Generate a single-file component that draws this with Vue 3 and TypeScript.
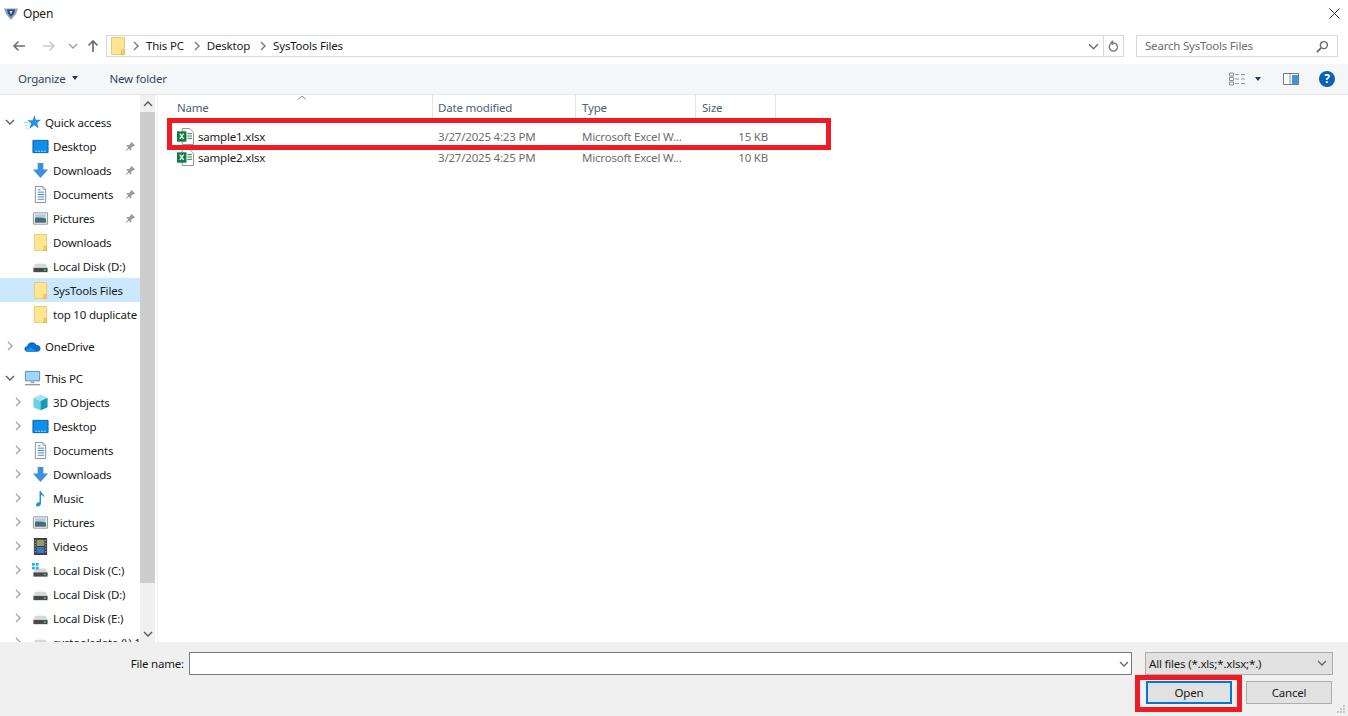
<script setup lang="ts">
interface TreeRow {
  label: string
  icon: string
  child?: boolean
  caret?: 'open' | 'closed'
  pin?: boolean
  selected?: boolean
  gapBefore?: boolean
}

interface FileRow {
  name: string
  modified: string
  type: string
  size: string
}

const treeRows: TreeRow[] = [
  { label: 'Quick access', icon: 'star', caret: 'open' },
  { label: 'Desktop', icon: 'desktop', child: true, pin: true },
  { label: 'Downloads', icon: 'download', child: true, pin: true },
  { label: 'Documents', icon: 'document', child: true, pin: true },
  { label: 'Pictures', icon: 'picture', child: true, pin: true },
  { label: 'Downloads', icon: 'folder', child: true },
  { label: 'Local Disk (D:)', icon: 'drive', child: true },
  { label: 'SysTools Files', icon: 'folder', child: true, selected: true },
  { label: 'top 10 duplicate', icon: 'folder', child: true },
  { label: 'OneDrive', icon: 'cloud', caret: 'closed', gapBefore: true },
  { label: 'This PC', icon: 'pc', caret: 'open', gapBefore: true },
  { label: '3D Objects', icon: 'cube', child: true, caret: 'closed' },
  { label: 'Desktop', icon: 'desktop', child: true, caret: 'closed' },
  { label: 'Documents', icon: 'document', child: true, caret: 'closed' },
  { label: 'Downloads', icon: 'download', child: true, caret: 'closed' },
  { label: 'Music', icon: 'music', child: true, caret: 'closed' },
  { label: 'Pictures', icon: 'picture', child: true, caret: 'closed' },
  { label: 'Videos', icon: 'video', child: true, caret: 'closed' },
  { label: 'Local Disk (C:)', icon: 'system-drive', child: true, caret: 'closed' },
  { label: 'Local Disk (D:)', icon: 'drive', child: true, caret: 'closed' },
  { label: 'Local Disk (E:)', icon: 'drive', child: true, caret: 'closed' },
  { label: 'systoolsdata (\\) 1', icon: 'drive', child: true, caret: 'closed' },
]

const files: FileRow[] = [
  { name: 'sample1.xlsx', modified: '3/27/2025 4:23 PM', type: 'Microsoft Excel W...', size: '15 KB' },
  { name: 'sample2.xlsx', modified: '3/27/2025 4:25 PM', type: 'Microsoft Excel W...', size: '10 KB' },
]

const crumbs: string[] = ['This PC', 'Desktop', 'SysTools Files']
</script>

<template>
  <div class="dialog">
    <svg class="sprites" aria-hidden="true">
      <symbol id="i-folder" viewBox="0 0 14 18">
        <path d="M.5.500h13v17H.5z" fill="#fde68f" stroke="#e9c976" />
        <path d="M10.500 13h3v4.500h-3z" fill="#f5cf6a" stroke="#dfb856" stroke-width=".7" />
      </symbol>
      <symbol id="i-desktop" viewBox="0 0 18 18">
        <path d="M1 2.500h16v13H1z" fill="#0d8fea" stroke="#0a5fa8" />
        <path d="M3.500 14h11" stroke="#bfe3fb" stroke-width="1" stroke-dasharray="2 1" />
      </symbol>
      <symbol id="i-download" viewBox="0 0 18 18">
        <path d="M6 1h6v7h5l-8 9-8-9h5z" fill="#3f8fe0" />
      </symbol>
      <symbol id="i-document" viewBox="0 0 18 18">
        <path d="M3.500 .5h8l3 3v14h-11z" fill="#fff" stroke="#8b8b8b" />
        <path d="M11.500 .5v3h3" fill="#e5e5e5" stroke="#8b8b8b" stroke-width=".8" />
        <path d="M6 4h3M6 6.500h7M6 9h7M6 11.500h7M6 14h7" stroke="#2f86cc" />
      </symbol>
      <symbol id="i-picture" viewBox="0 0 18 18">
        <path d="M1.500 3h15v12h-15z" fill="#fff" stroke="#8d8d8d" />
        <path d="M3 4.500h12v4H3z" fill="#a9cfe9" />
        <path d="M3 8.500c4-1 8 0 12 .5v4.500H3z" fill="#4c6d76" />
      </symbol>
      <symbol id="i-drive" viewBox="0 0 18 18">
        <path d="M3.500 6h11l2 4.500h-15z" fill="#d8d8d8" />
        <path d="M1.500 10.500h15v4.500h-15z" fill="#4a4a4a" />
        <path d="M12.500 12h2v1.500h-2z" fill="#55d45c" />
      </symbol>
      <symbol id="i-system-drive" viewBox="0 0 18 18">
        <path d="M3.500 7h11l2 4h-15z" fill="#d8d8d8" />
        <path d="M1.500 11h15v4.500h-15z" fill="#4a4a4a" />
        <path d="M12.500 12.500h2V14h-2z" fill="#55d45c" />
        <path d="M0 1h3v3H0zM4 1h3v3H4zM0 5h3v3H0zM4 5h3v3H4z" fill="#21b4e8" />
      </symbol>
      <symbol id="i-star" viewBox="0 0 18 18">
        <path d="M11 1l1.600 5H18l-4 3.400 1.500 6L10.800 12 5.500 16l2-6.200L3.500 6.500h5.600z" fill="#2b8fe0" />
        <path d="M0 9h4M1 12h3M2 15h2" stroke="#9ccff2" />
      </symbol>
      <symbol id="i-cloud" viewBox="0 0 18 18">
        <path d="M4 14.500C1.500 14.500.5 13 .5 11.600c0-1.600 1.300-2.800 2.800-2.900C4 6 6 4.500 8.500 4.500c2.300 0 3.900 1.300 4.700 3 2.400-.2 4.300 1.400 4.300 3.600 0 1.900-1.400 3.400-3.600 3.400z" fill="#0b6fcb" />
        <path d="M4 14.500c-1.600 0-2.700-.6-3.200-1.500l6.300-3.400 7 4.900z" fill="#1c8fe6" />
      </symbol>
      <symbol id="i-pc" viewBox="0 0 18 18">
        <path d="M1.500 1.500h15v10h-15z" fill="#9fd7fb" stroke="#4e90c2" />
        <path d="M7 12h4v2H7z" fill="#a8a8a8" />
        <path d="M1 15.500h16" stroke="#9a9a9a" stroke-width="1.500" />
      </symbol>
      <symbol id="i-cube" viewBox="0 0 18 18">
        <path d="M9 .5l7.500 3.500L9 7.500 1.500 4z" fill="#a3e6ef" />
        <path d="M1.500 4L9 7.500v10l-7.500-3.500z" fill="#6ed2e2" />
        <path d="M16.500 4v10L9 17.500v-10z" fill="#159cb4" />
      </symbol>
      <symbol id="i-music" viewBox="0 0 18 18">
        <path d="M8 1h1.500c.3 3 4 3.500 3.500 7-.8-1.700-2-2.500-3.400-2.700V14c0 2-1.800 3.500-3.600 3.500S4 16.200 4.600 14.600C5.100 13.400 6.700 12.700 8 13z" fill="#1f8fe3" />
      </symbol>
      <symbol id="i-video" viewBox="0 0 18 18">
        <path d="M2 0h14v18H2z" fill="#39424c" />
        <path d="M5 2h8v6.500H5z" fill="#9a9a5a" />
        <path d="M5 9.500h8V16H5z" fill="#3d76c9" />
        <path d="M3 2h1v1H3zM3 5h1v1H3zM3 8h1v1H3zM3 11h1v1H3zM3 14h1v1H3zM14 2h1v1h-1zM14 5h1v1h-1zM14 8h1v1h-1zM14 11h1v1h-1zM14 14h1v1h-1z" fill="#d8d8d8" />
      </symbol>
      <symbol id="i-excel" viewBox="0 0 18 18">
        <path d="M5.500 .5h8l4 4v13h-12z" fill="#fff" stroke="#8f8f8f" />
        <path d="M11 6h5M11 8.500h5M11 11h5" stroke="#1f7d4c" />
        <path d="M0 3.500h10v11H0z" fill="#107c41" />
        <path d="M3 6l4 5.500M7 6l-4 5.500" stroke="#fff" stroke-width="1.400" />
      </symbol>
      <symbol id="i-chevron" viewBox="0 0 10 10">
        <path d="M3 1l4 4-4 4" fill="none" stroke="currentColor" stroke-width="1.400" />
      </symbol>
      <symbol id="i-down" viewBox="0 0 10 10">
        <path d="M1 3l4 4 4-4" fill="none" stroke="currentColor" stroke-width="1.300" />
      </symbol>
      <symbol id="i-pin" viewBox="0 0 12 12">
        <path d="M7 1l4 4-1 .8-1-.4-2.300 2.300.2 1.800-.9.900-2-2L1.500 10.500.9 10l2.600-2.700-2-2 1-.9 1.700.2 2.300-2.300-.3-1z" fill="#9a9a9a" />
      </symbol>
    </svg>

    <header class="titlebar">
      <svg class="app-logo" viewBox="0 0 14 13" aria-hidden="true">
        <path d="M0 1.500h14L12 7 7 13 2 7z" fill="#8fa0bd" />
        <path d="M3 2.500h8L10 6.500 7 10 4 6.500z" fill="#274a8e" />
        <path d="M5.500 4h3L7 7.500z" fill="#e6ebf3" />
      </svg>
      <span class="title">Open</span>
      <svg class="close" viewBox="0 0 12 12" aria-hidden="true">
        <path d="M.5.500l11 11M11.500.500l-11 11" stroke="#1a1a1a" stroke-width="1" />
      </svg>
    </header>

    <nav class="navbar">
      <div class="nav-buttons">
        <svg class="nav-arrow" viewBox="0 0 14 14" aria-hidden="true">
          <path d="M13 7H2M6.500 2.500L2 7l4.500 4.500" fill="none" stroke="#6e6e6e" stroke-width="1.500" />
        </svg>
        <svg class="nav-arrow forward" viewBox="0 0 14 14" aria-hidden="true">
          <path d="M1 7h11M7.500 2.500L12 7l-4.500 4.500" fill="none" stroke="#c9c9c9" stroke-width="1.500" />
        </svg>
        <svg class="nav-recent"><use href="#i-down" /></svg>
        <svg class="nav-arrow up" viewBox="0 0 14 14" aria-hidden="true">
          <path d="M7 13V2M2.500 6.500L7 2l4.500 4.500" fill="none" stroke="#6e6e6e" stroke-width="1.700" />
        </svg>
      </div>
      <div class="address">
        <svg class="address-folder"><use href="#i-folder" /></svg>
        <template v-for="crumb in crumbs" :key="crumb">
          <svg class="crumb-sep"><use href="#i-chevron" /></svg>
          <span class="crumb">{{ crumb }}</span>
        </template>
        <svg class="address-down"><use href="#i-down" /></svg>
        <span class="refresh">
          <svg viewBox="0 0 12 14" aria-hidden="true">
            <path d="M3 4a4.500 4.500 0 1 0 3-1H3.500M5.500 .8L3.300 3l2.200 2.200" fill="none" stroke="#707070" stroke-width="1.400" />
          </svg>
        </span>
      </div>
      <div class="search">
        <span>Search SysTools Files</span>
        <svg viewBox="0 0 14 14" aria-hidden="true">
          <circle cx="8.500" cy="5.500" r="3.800" fill="none" stroke="#6a6a6a" stroke-width="1.500" />
          <path d="M5.500 8.500L1 13" stroke="#6a6a6a" stroke-width="2" />
        </svg>
      </div>
    </nav>

    <div class="toolbar">
      <span class="tool">Organize<i class="tool-caret"></i></span>
      <span class="tool new-folder">New folder</span>
      <div class="tool-icons">
        <svg class="views" viewBox="0 0 17 14" aria-hidden="true">
          <path d="M.5 1h4v3h-4zM.5 5.500h4v3h-4zM.5 10h4v3h-4z" fill="#fff" stroke="#8c8c8c" />
          <path d="M6 2.500h4M12 2.500h4M6 7h4M12 7h4M6 11.500h4M12 11.500h4" stroke="#9a9a9a" />
        </svg>
        <i class="tool-caret views-caret"></i>
        <svg class="pane" viewBox="0 0 16 12" aria-hidden="true">
          <path d="M.5.500h15v11H.5z" fill="#fff" stroke="#6f7b85" />
          <path d="M7 1v10" stroke="#8a949c" />
          <path d="M9 2h6v9H9z" fill="#3d95dd" />
        </svg>
        <span class="help">?</span>
      </div>
    </div>

    <main class="body">
      <aside class="tree">
        <div
          v-for="(row, index) in treeRows"
          :key="index"
          class="tree-row"
          :class="{ child: row.child, selected: row.selected, spaced: row.gapBefore }"
        >
          <svg v-if="row.caret === 'closed'" class="caret"><use href="#i-chevron" /></svg>
          <svg v-else-if="row.caret === 'open'" class="caret open"><use href="#i-down" /></svg>
          <span v-else class="caret"></span>
          <svg class="tree-icon"><use :href="`#i-${row.icon}`" /></svg>
          <span class="tree-label">{{ row.label }}</span>
          <svg v-if="row.pin" class="pin"><use href="#i-pin" /></svg>
        </div>
      </aside>

      <div class="scrollbar">
        <svg class="scroll-arrow"><use href="#i-down" transform="rotate(180 5 5)" /></svg>
        <div class="thumb"></div>
        <svg class="scroll-arrow bottom"><use href="#i-down" /></svg>
      </div>

      <section class="files">
        <div class="files-head">
          <span class="col name">Name</span>
          <span class="col date">Date modified</span>
          <span class="col type">Type</span>
          <span class="col size">Size</span>
          <svg class="sort-mark" viewBox="0 0 10 5" aria-hidden="true">
            <path d="M1 4.500l4-3.500 4 3.500" fill="none" stroke="#8a8a8a" />
          </svg>
        </div>
        <div v-for="file in files" :key="file.name" class="file-row">
          <span class="cell name">
            <svg class="excel"><use href="#i-excel" /></svg>
            {{ file.name }}
          </span>
          <span class="cell date">{{ file.modified }}</span>
          <span class="cell type">{{ file.type }}</span>
          <span class="cell size">{{ file.size }}</span>
        </div>
        <div class="mark mark-row"></div>
      </section>
    </main>

    <footer class="footer">
      <div class="footer-top">
        <label class="file-label" for="file-name">File name:</label>
        <div class="file-input">
          <input id="file-name" type="text" />
          <svg><use href="#i-down" /></svg>
        </div>
        <div class="filter">
          <span>All files (*.xls;*.xlsx;*.)</span>
          <svg><use href="#i-down" /></svg>
        </div>
      </div>
      <div class="footer-actions">
        <button type="button" class="btn primary">Open</button>
        <button type="button" class="btn">Cancel</button>
      </div>
      <div class="mark mark-open"></div>
      <svg class="grip" viewBox="0 0 10 10" aria-hidden="true">
        <path d="M7 1h2v2H7zM4 4h2v2H4zM7 4h2v2H7zM1 7h2v2H1zM4 7h2v2H4zM7 7h2v2H7z" fill="#c4c4c4" />
      </svg>
    </footer>
  </div>
</template>

<style scoped>
.dialog {
  position: relative;
  display: flex;
  flex-direction: column;
  width: 1348px;
  height: 716px;
  overflow: hidden;
  background: #fff;
  color: #1a1a1a;
  font-family: "Noto Sans", "Open Sans", sans-serif;
  font-size: 11.5px;
  letter-spacing: -0.2px;
}

.sprites {
  position: absolute;
  width: 0;
  height: 0;
}

.titlebar {
  display: flex;
  align-items: center;
  flex: none;
  box-sizing: border-box;
  height: 28px;
  padding: 0 8px 2px 4px;
}

.app-logo {
  width: 14px;
  height: 13px;
  margin-right: 5px;
}

.title {
  flex: 1;
  font-size: 12px;
}

.close {
  width: 11px;
  height: 11px;
}

.navbar {
  display: flex;
  align-items: center;
  flex: none;
  height: 36px;
  padding-right: 10px;
}

.nav-buttons {
  display: flex;
  align-items: center;
  flex: none;
  width: 106px;
  height: 100%;
}

.nav-arrow {
  width: 14px;
  height: 14px;
  margin-left: 12px;
}

.forward {
  margin-left: 16px;
}

.nav-recent {
  width: 10px;
  height: 10px;
  margin-left: 12px;
  color: #9a9a9a;
}

.up {
  margin-left: 8px;
}

.address,
.search {
  display: flex;
  align-items: center;
  height: 22px;
  border: 1px solid #d9d9d9;
  box-sizing: border-box;
}

.address {
  flex: none;
  width: 1018px;
  padding-left: 4px;
}

.address-folder {
  width: 14px;
  height: 18px;
  margin-right: 3px;
}

.crumb-sep {
  width: 10px;
  height: 10px;
  margin: 0 5px 0 3px;
  color: #7a7a7a;
}

.crumb {
  margin-right: 5px;
  padding-bottom: 2px;
}

.address-down {
  width: 11px;
  height: 11px;
  margin-left: auto;
  margin-right: 4px;
  color: #6f6f6f;
}

.refresh {
  display: flex;
  align-items: center;
  justify-content: center;
  width: 20px;
  height: 100%;
  border-left: 1px solid #d9d9d9;
  box-sizing: border-box;
}

.refresh svg {
  width: 11px;
  height: 13px;
}

.search {
  justify-content: space-between;
  flex: none;
  width: 202px;
  margin-left: 12px;
  padding: 0 8px 0 8px;
  color: #6d6d6d;
}

.search span {
  padding-bottom: 2px;
}

.search svg {
  width: 13px;
  height: 13px;
}

.toolbar {
  display: flex;
  align-items: center;
  flex: none;
  height: 30px;
  padding-left: 18px;
  background: #f5f6f7;
  border-bottom: 1px solid #e6e6e6;
  color: #33475f;
}

.tool {
  display: flex;
  align-items: center;
  padding-bottom: 2px;
}

.tool-caret {
  width: 0;
  height: 0;
  margin-left: 6px;
  border-top: 4px solid #1f3c5c;
  border-left: 3.500px solid transparent;
  border-right: 3.500px solid transparent;
}

.new-folder {
  margin-left: 32px;
}

.tool-icons {
  display: flex;
  align-items: center;
  margin-left: auto;
  padding-right: 13px;
}

.views {
  width: 17px;
  height: 14px;
}

.views-caret {
  margin-left: 9px;
}

.pane {
  width: 16px;
  height: 12px;
  margin-left: 22px;
}

.help {
  width: 16px;
  height: 16px;
  margin-left: 20px;
  border-radius: 50%;
  background: #0a61b5;
  color: #fff;
  font-size: 12px;
  font-weight: 700;
  line-height: 16px;
  text-align: center;
}

.body {
  display: flex;
  flex: 1;
  min-height: 0;
}

.tree {
  flex: none;
  width: 140px;
  padding-top: 15px;
  overflow: hidden;
}

.tree-row {
  display: flex;
  align-items: center;
  height: 24px;
  white-space: nowrap;
}

.tree-row.spaced {
  margin-top: 8px;
}

.tree-row.selected {
  background: #cce8ff;
}

.caret {
  flex: none;
  width: 10px;
  height: 10px;
  margin: 0 9px 0 5px;
  color: #a6a6a6;
}

.caret.open {
  color: #5e5e5e;
}

.child .caret {
  margin: 0 9px 0 13px;
}

.tree-icon {
  flex: none;
  width: 17px;
  height: 17px;
  margin-right: 4px;
}

.tree-label {
  flex: none;
}

.pin {
  position: absolute;
  left: 125px;
  width: 11px;
  height: 11px;
}

.scrollbar {
  position: relative;
  flex: none;
  width: 15px;
  background: #f0f0f0;
}

.thumb {
  height: 471px;
  margin-top: 17px;
  background: #cdcdcd;
}

.scroll-arrow {
  position: absolute;
  top: 4px;
  left: 3px;
  width: 10px;
  height: 10px;
  color: #555;
}

.scroll-arrow.bottom {
  top: auto;
  bottom: 3px;
}

.files {
  position: relative;
  flex: 1;
  margin-left: 2px;
  border-left: 1px solid #f0f0f0;
}

.files-head,
.file-row {
  display: grid;
  grid-template-columns: 275px 143px 120px 80px;
}

.files-head {
  position: relative;
  height: 25px;
  margin-bottom: 6px;
  color: #4c607a;
}

.col {
  display: flex;
  align-items: center;
  padding-left: 6px;
  border-right: 1px solid #e5e5e5;
}

.col.name {
  padding-left: 19px;
}

.col.date,
.cell.date {
  padding-left: 5px;
}

.sort-mark {
  position: absolute;
  top: 0;
  left: 139px;
  width: 10px;
  height: 5px;
}

.file-row {
  align-items: center;
  height: 21px;
  color: #6d6d6d;
}

.cell {
  padding-left: 6px;
  white-space: nowrap;
}

.cell.name {
  display: flex;
  align-items: center;
  gap: 4px;
  padding-left: 19px;
  color: #1a1a1a;
}

.cell.size {
  padding-right: 8px;
  text-align: right;
}

.excel {
  width: 17px;
  height: 17px;
}

.mark {
  position: absolute;
  border: 5px solid #ed1c24;
  box-sizing: border-box;
}

.mark-row {
  top: 23px;
  left: 9px;
  width: 664px;
  height: 32px;
}

.footer {
  position: relative;
  flex: none;
  height: 74px;
  background: #f0f0f0;
}

.footer-top {
  display: flex;
  align-items: center;
  height: 24px;
  padding-top: 9px;
}

.file-label {
  width: 184px;
  text-align: right;
}

.file-input {
  position: relative;
  width: 943px;
  height: 23px;
  margin-left: 5px;
}

.file-input input {
  display: block;
  width: 100%;
  height: 100%;
  padding: 0;
  border: 1px solid #7a7a7a;
  background: #fff;
  box-sizing: border-box;
}

.file-input svg {
  position: absolute;
  top: 7px;
  right: 3px;
  width: 10px;
  height: 10px;
  color: #666;
}

.filter {
  display: flex;
  align-items: center;
  justify-content: space-between;
  box-sizing: border-box;
  width: 188px;
  height: 23px;
  margin-left: 13px;
  padding: 0 5px 0 3px;
  background: #e1e1e1;
  border: 1px solid #adadad;
}

.filter svg {
  width: 10px;
  height: 10px;
  color: #666;
}

.footer-actions {
  display: flex;
  justify-content: flex-end;
  gap: 14px;
  margin-top: 6px;
  padding-right: 16px;
}

.btn {
  box-sizing: border-box;
  width: 86px;
  height: 23px;
  padding: 0;
  background: #e1e1e1;
  border: 1px solid #adadad;
  color: #1a1a1a;
  font: inherit;
  letter-spacing: inherit;
}

.btn.primary {
  border: 2px solid #0078d7;
}

.mark-open {
  top: 33px;
  left: 1135px;
  width: 107px;
  height: 37px;
}

.grip {
  position: absolute;
  right: 2px;
  bottom: 2px;
  width: 10px;
  height: 10px;
}
</style>
